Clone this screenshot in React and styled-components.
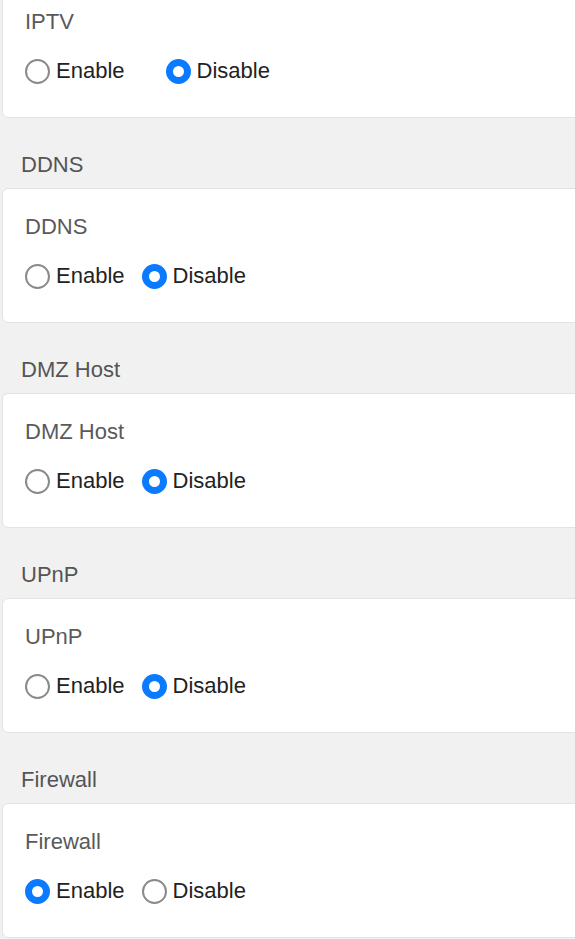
import React, { useState } from "react";
import styled, { createGlobalStyle } from "styled-components";

const GlobalStyle = createGlobalStyle`
  html, body {
    margin: 0;
    padding: 0;
    background: #f1f1f1;
    overflow: hidden;
  }
  body {
    font-family: "Liberation Sans", Arial, sans-serif;
  }
`;

const Page = styled.div`
  display: flex;
  flex-direction: column;
  margin-top: -17px;
  padding-left: 2px;
  overflow: hidden;
`;

const Section = styled.section`
  display: flex;
  flex-direction: column;
  padding-top: ${(p) => (p.$first ? 0 : 36)}px;
`;

const SectionTitle = styled.h2`
  margin: 0 0 12px 19px;
  font-size: 22px;
  line-height: 22px;
  font-weight: 400;
  color: #555;
`;

const Card = styled.div`
  background: #fff;
  border: 1px solid #e3e3e3;
  border-radius: 6px;
  margin-right: -30px;
  padding: 27px 0 33px 22px;
  display: flex;
  flex-direction: column;
  gap: 25px;
`;

const FieldLabel = styled.div`
  font-size: 22px;
  line-height: 22px;
  color: #5a5a5a;
`;

const RadioRow = styled.div`
  display: flex;
  align-items: center;
  height: 26px;
  gap: ${(p) => p.$gap}px;
`;

const Option = styled.label`
  display: flex;
  align-items: center;
  gap: 6px;
  cursor: pointer;
  font-size: 22px;
  line-height: 26px;
  color: #222;
`;

const Circle = styled.span`
  box-sizing: border-box;
  width: 25px;
  height: 25px;
  border-radius: 50%;
  background: #fff;
  border: ${(p) => (p.$checked ? "7.5px solid #0a7aff" : "2px solid #8a8a8a")};
  flex-shrink: 0;
`;

const settings = [
  { key: "iptv", title: null, label: "IPTV", value: "disable", gap: 41 },
  { key: "ddns", title: "DDNS", label: "DDNS", value: "disable", gap: 17 },
  { key: "dmz", title: "DMZ Host", label: "DMZ Host", value: "disable", gap: 17 },
  { key: "upnp", title: "UPnP", label: "UPnP", value: "disable", gap: 17 },
  { key: "fw", title: "Firewall", label: "Firewall", value: "enable", gap: 17 },
];

const RadioGroup = ({ value, onChange, gap }) => (
  <RadioRow $gap={gap}>
    <Option onClick={() => onChange("enable")}>
      <Circle $checked={value === "enable"} />
      Enable
    </Option>
    <Option onClick={() => onChange("disable")}>
      <Circle $checked={value === "disable"} />
      Disable
    </Option>
  </RadioRow>
);

const App = () => {
  const [values, setValues] = useState(
    Object.fromEntries(settings.map((s) => [s.key, s.value]))
  );

  return (
    <>
      <GlobalStyle />
      <Page>
        {settings.map((s, i) => (
          <Section key={s.key} $first={i === 0}>
            {s.title && <SectionTitle>{s.title}</SectionTitle>}
            <Card>
              <FieldLabel>{s.label}</FieldLabel>
              <RadioGroup
                gap={s.gap}
                value={values[s.key]}
                onChange={(v) => setValues({ ...values, [s.key]: v })}
              />
            </Card>
          </Section>
        ))}
      </Page>
    </>
  );
};

export default App;
